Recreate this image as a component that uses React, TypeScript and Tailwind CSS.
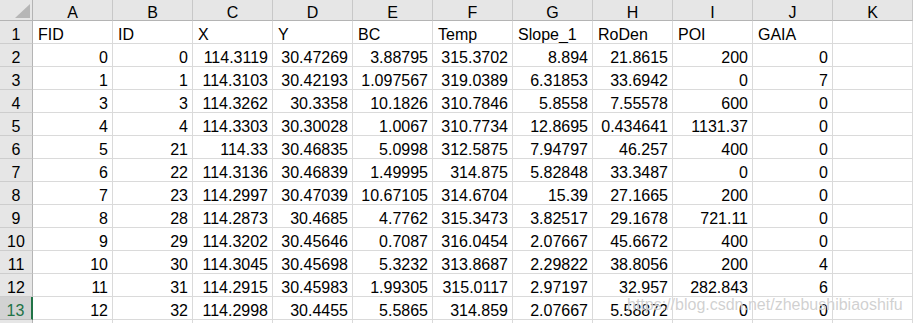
import React from "react";

const cols = ["A", "B", "C", "D", "E", "F", "G", "H", "I", "J", "K"];

const head = ["FID", "ID", "X", "Y", "BC", "Temp", "Slope_1", "RoDen", "POI", "GAIA"];

const rows: (string | number)[][] = [
  [0, 0, "114.3119", "30.47269", "3.88795", "315.3702", "8.894", "21.8615", 200, 0],
  [1, 1, "114.3103", "30.42193", "1.097567", "319.0389", "6.31853", "33.6942", 0, 7],
  [3, 3, "114.3262", "30.3358", "10.1826", "310.7846", "5.8558", "7.55578", 600, 0],
  [4, 4, "114.3303", "30.30028", "1.0067", "310.7734", "12.8695", "0.434641", "1131.37", 0],
  [5, 21, "114.33", "30.46835", "5.0998", "312.5875", "7.94797", "46.257", 400, 0],
  [6, 22, "114.3136", "30.46839", "1.49995", "314.875", "5.82848", "33.3487", 0, 0],
  [7, 23, "114.2997", "30.47039", "10.67105", "314.6704", "15.39", "27.1665", 200, 0],
  [8, 28, "114.2873", "30.4685", "4.7762", "315.3473", "3.82517", "29.1678", "721.11", 0],
  [9, 29, "114.3202", "30.45646", "0.7087", "316.0454", "2.07667", "45.6672", 400, 0],
  [10, 30, "114.3045", "30.45698", "5.3232", "313.8687", "2.29822", "38.8056", 200, 4],
  [11, 31, "114.2915", "30.45983", "1.99305", "315.0117", "2.97197", "32.957", "282.843", 6],
  [12, 32, "114.2998", "30.4455", "5.5865", "314.859", "2.07667", "5.58872", 0, 0],
];

const cell = "h-[23px] w-[80px] shrink-0 border-r border-b border-[#dadada] overflow-hidden whitespace-nowrap leading-[27px]";

const RowHead: React.FC<{ n?: number; selected?: boolean }> = ({ n, selected }) => (
  <div
    className={`h-[23px] w-[33px] shrink-0 border-b overflow-hidden text-center leading-[27px] ${
      selected
        ? "bg-[#d2d2d2] text-[#217346] border-r-2 border-r-[#217346] border-b-[#bdbdbd]"
        : "bg-[#e6e6e6] text-black border-r border-r-[#b4b4b4] border-b-[#cdcdcd]"
    }`}
  >
    {n}
  </div>
);

export default function App() {
  return (
    <div
      className="relative w-[913px] h-[323px] overflow-hidden bg-white text-[16px] text-black"
      style={{ fontFamily: '"Liberation Sans", Arial, sans-serif' }}
    >
      {/* column headers */}
      <div className="flex">
        <div className="h-[21px] w-[33px] shrink-0 bg-[#e6e6e6] border-r border-b border-[#b4b4b4] flex items-end justify-end pr-[2px] pb-[2px]">
          <svg width="15" height="14" viewBox="0 0 15 14">
            <polygon points="15,0 15,14 0,14" fill="#b6b6b6" />
          </svg>
        </div>
        {cols.map((c) => (
          <div
            key={c}
            className="h-[21px] w-[80px] shrink-0 bg-[#e6e6e6] border-r border-r-[#c8c8c8] border-b border-b-[#b4b4b4] text-center leading-[25px] overflow-hidden"
          >
            {c}
          </div>
        ))}
      </div>

      {/* row 1: field names */}
      <div className="flex">
        <RowHead n={1} />
        {head.map((h) => (
          <div key={h} className={`${cell} pl-[5px]`}>
            {h}
          </div>
        ))}
        <div className={cell}></div>
      </div>

      {rows.map((r, i) => (
        <div key={i} className="flex">
          <RowHead n={i + 2} selected={i === rows.length - 1} />
          {r.map((v, j) => (
            <div key={j} className={`${cell} text-right pr-[4px]`}>
              {v}
            </div>
          ))}
          <div className={cell}></div>
        </div>
      ))}

      {/* row 14, only its top edge is visible */}
      <div className="flex">
        <RowHead />
        {cols.map((c) => (
          <div key={c} className={cell}></div>
        ))}
      </div>

      <div
        className="absolute left-[627px] top-[295px] text-[16px] leading-[20px] text-[#bcbcbc]/70 whitespace-nowrap pointer-events-none"
        style={{ textShadow: "0 0 1px #fff" }}
      >
        https://blog.csdn.net/zhebushibiaoshifu
      </div>
    </div>
  );
}
